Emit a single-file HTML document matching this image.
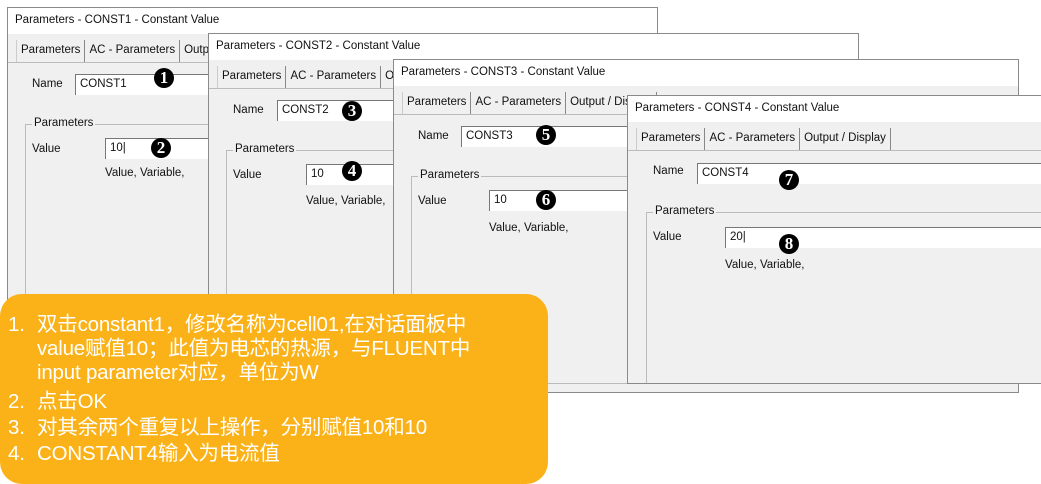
<!DOCTYPE html>
<html><head><meta charset="utf-8">
<style>
*{margin:0;padding:0;box-sizing:border-box}
body{width:1041px;height:471px;overflow:hidden;background:#fff;position:relative;font-family:"Liberation Sans","Noto Sans CJK SC",sans-serif;font-size:11.5px;color:#111}
.dlg{position:absolute;background:#f0f0f0;border:1px solid #8a8a8a;overflow:hidden}
.tb{position:absolute;left:0;top:0;right:0;height:26px;background:#fff;padding:6px 0 0 7px;font-size:11.5px}
.tabs{position:absolute;left:8px;top:32px;height:22px;display:flex}
.tab{padding:4px 4px;border-right:1px solid #888;height:22px;white-space:nowrap}
.tab.a{border-left:1px solid #ccc;background:#f0f0f0}
.line{position:absolute;left:0;right:0;top:54px;border-top:1px solid #bbb}
.lbl{position:absolute}
.inp{position:absolute;background:#fff;border-top:1px solid #777;border-left:1px solid #777;height:21px;padding:3px 4px;right:-10px}
.grp{position:absolute;border:1px solid #bbb;bottom:8px;right:-10px}
.grp span{position:absolute;top:-8px;left:6px;background:#f0f0f0;padding:0 2px}
.b{position:absolute;width:20px;height:20px;border-radius:50%;background:#000;color:#fff;font-family:"Liberation Serif",serif;font-weight:bold;font-size:17px;line-height:20px;text-align:center}
.org{position:absolute;left:0;top:294px;width:548px;height:190px;background:#fbb218;border-radius:22px;color:#fff;font-size:20.5px;line-height:26px;padding:19px 0 0 8px;letter-spacing:-0.2px}
.org div{position:relative;padding-left:29px;white-space:nowrap}
.org div.f{line-height:24px;margin-bottom:4px}
.org div b{position:absolute;left:0;font-weight:normal}
</style></head><body>

<div class="dlg" style="left:7px;top:7px;width:651px;height:300px">
 <div class="tb">Parameters - CONST1 - Constant Value</div>
 <div class="line"></div>
 <div class="tabs"><div class="tab a">Parameters</div><div class="tab">AC - Parameters</div><div class="tab">Output / Display</div></div>
 <div class="lbl" style="left:24px;top:70px">Name</div>
 <div class="inp" style="left:67px;top:66px">CONST1</div>
 <div class="grp" style="left:17px;top:116px"><span>Parameters</span></div>
 <div class="lbl" style="left:24px;top:135px">Value</div>
 <div class="inp" style="left:97px;top:130px">10|</div>
 <div class="lbl" style="left:97px;top:159px">Value, Variable,</div>
</div>

<div class="dlg" style="left:208px;top:33px;width:651px;height:360px">
 <div class="tb">Parameters - CONST2 - Constant Value</div>
 <div class="line"></div>
 <div class="tabs"><div class="tab a">Parameters</div><div class="tab">AC - Parameters</div><div class="tab">Output / Display</div></div>
 <div class="lbl" style="left:24px;top:70px">Name</div>
 <div class="inp" style="left:68px;top:66px">CONST2</div>
 <div class="grp" style="left:17px;top:116px"><span>Parameters</span></div>
 <div class="lbl" style="left:24px;top:135px">Value</div>
 <div class="inp" style="left:97px;top:130px">10</div>
 <div class="lbl" style="left:97px;top:161px">Value, Variable,</div>
</div>

<div class="dlg" style="left:393px;top:59px;width:626px;height:334px">
 <div class="tb">Parameters - CONST3 - Constant Value</div>
 <div class="line"></div>
 <div class="tabs"><div class="tab a">Parameters</div><div class="tab">AC - Parameters</div><div class="tab">Output / Display</div></div>
 <div class="lbl" style="left:24px;top:70px">Name</div>
 <div class="inp" style="left:67px;top:66px">CONST3</div>
 <div class="grp" style="left:17px;top:116px"><span>Parameters</span></div>
 <div class="lbl" style="left:24px;top:135px">Value</div>
 <div class="inp" style="left:95px;top:130px">10</div>
 <div class="lbl" style="left:95px;top:162px">Value, Variable,</div>
</div>

<div class="dlg" style="left:627px;top:95px;width:430px;height:289px;border-right:none">
 <div class="tb">Parameters - CONST4 - Constant Value</div>
 <div class="line"></div>
 <div class="tabs"><div class="tab a">Parameters</div><div class="tab">AC - Parameters</div><div class="tab">Output / Display</div></div>
 <div class="lbl" style="left:25px;top:69px">Name</div>
 <div class="inp" style="left:69px;top:67px">CONST4</div>
 <div class="grp" style="left:18px;top:116px;bottom:-5px"><span>Parameters</span></div>
 <div class="lbl" style="left:25px;top:135px">Value</div>
 <div class="inp" style="left:97px;top:131px">20|</div>
 <div class="lbl" style="left:97px;top:163px">Value, Variable,</div>
</div>

<div class="b" style="left:154px;top:68px">1</div>
<div class="b" style="left:151px;top:138px">2</div>
<div class="b" style="left:342px;top:101px">3</div>
<div class="b" style="left:342px;top:161px">4</div>
<div class="b" style="left:536px;top:125px">5</div>
<div class="b" style="left:536px;top:190px">6</div>
<div class="b" style="left:779px;top:170px">7</div>
<div class="b" style="left:779px;top:234px">8</div>

<div class="org">
 <div class="f"><b>1.</b>双击constant1，修改名称为cell01,在对话面板中<br>value赋值10；此值为电芯的热源，与FLUENT中<br>input parameter对应，单位为W</div>
 <div><b>2.</b>点击OK</div>
 <div><b>3.</b>对其余两个重复以上操作，分别赋值10和10</div>
 <div><b>4.</b>CONSTANT4输入为电流值</div>
</div>
</body></html>
